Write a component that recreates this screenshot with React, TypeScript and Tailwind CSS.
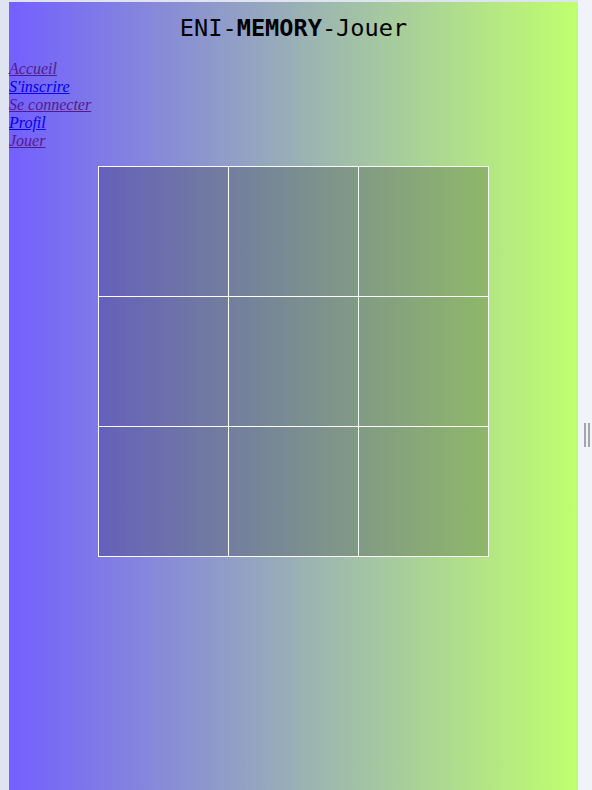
import React from 'react';

const links = [
  { label: 'Accueil', visited: true },
  { label: "S'inscrire", visited: false },
  { label: 'Se connecter', visited: true },
  { label: 'Profil', visited: false },
  { label: 'Jouer', visited: true },
];

export default function App() {
  const cells = Array.from({ length: 9 }, (_, i) => i);

  return (
    <div className="flex h-[790px] w-[592px] bg-[#dfe4f0] pl-[9px] pt-[2px]">
      {/* page content */}
      <div className="flex h-[788px] w-[569px] flex-col bg-[linear-gradient(to_right,#7360ff,#bfff6e)]">
        <h1 className="mt-[12px] text-center font-['DejaVu_Sans_Mono',monospace] text-[23.6px] leading-[28px] text-black">
          ENI-<span className="font-bold">MEMORY</span>-Jouer
        </h1>

        <nav className="mt-[18px] flex flex-col items-start font-['Liberation_Serif',serif] text-[16px] italic leading-[18px]">
          {links.map((l) => (
            <a
              key={l.label}
              href="#"
              className={`underline ${l.visited ? 'text-[#551a8b]' : 'text-[#0000ee]'}`}
            >
              {l.label}
            </a>
          ))}
        </nav>

        <div className="mx-auto mt-[16px] grid w-[391px] grid-cols-3 border-l border-t border-white">
          {cells.map((c) => (
            <div
              key={c}
              className="h-[130px] w-[130px] border-b border-r border-white bg-black/20"
            />
          ))}
        </div>
      </div>

      {/* right gutter with resize handle */}
      <div className="relative -mt-[2px] flex-1 bg-[#f1f3f8]">
        <div className="absolute left-[6px] top-[423px] flex gap-[2px]">
          <div className="h-[24px] w-[2px] bg-[#a3a3ab]" />
          <div className="h-[24px] w-[2px] bg-[#a3a3ab]" />
        </div>
      </div>
    </div>
  );
}
